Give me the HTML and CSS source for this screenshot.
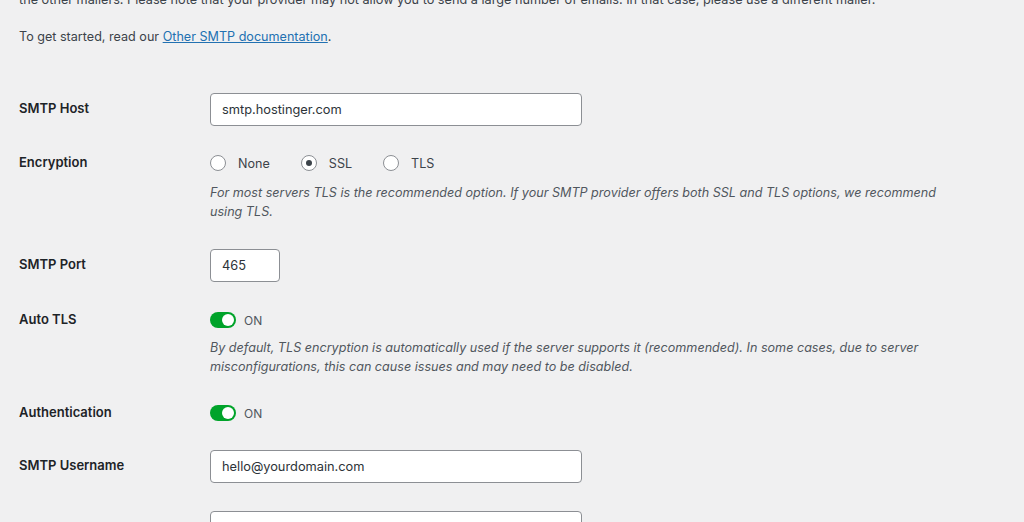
FILE: index.html
```html
<!DOCTYPE html>
<html lang="en">
<head>
<meta charset="utf-8">
<title>Other SMTP settings</title>
<link rel="stylesheet" href="styles.css">
</head>
<body>
<div class="page">
  <p class="intro intro-cut">the other mailers. Please note that your provider may not allow you to send a large number of emails. In that case, please use a different mailer.</p>
  <p class="intro">To get started, read our <a href="#" class="doc-link">Other SMTP documentation</a>.</p>

  <div class="form">
    <div class="row row-input">
      <div class="label">SMTP Host</div>
      <div class="field"><input class="text" type="text" value="smtp.hostinger.com"></div>
    </div>

    <div class="row row-tight">
      <div class="label">Encryption</div>
      <div class="field">
        <div class="radios">
          <span class="radio"></span><span class="radio-label">None</span>
          <span class="radio checked"></span><span class="radio-label">SSL</span>
          <span class="radio"></span><span class="radio-label">TLS</span>
        </div>
        <p class="desc desc-enc">For most servers TLS is the recommended option. If your SMTP provider offers both SSL and TLS options, we recommend using TLS.</p>
      </div>
    </div>

    <div class="row row-input">
      <div class="label">SMTP Port</div>
      <div class="field"><input class="text text-port" type="text" value="465"></div>
    </div>

    <div class="row">
      <div class="label">Auto TLS</div>
      <div class="field">
        <div class="toggle-wrap"><span class="toggle"><span class="knob"></span></span><span class="toggle-label">ON</span></div>
        <p class="desc desc-tls">By default, TLS encryption is automatically used if the server supports it (recommended). In some cases, due to server misconfigurations, this can cause issues and may need to be disabled.</p>
      </div>
    </div>

    <div class="row row-tight">
      <div class="label">Authentication</div>
      <div class="field">
        <div class="toggle-wrap"><span class="toggle"><span class="knob"></span></span><span class="toggle-label">ON</span></div>
      </div>
    </div>

    <div class="row row-input row-tight">
      <div class="label">SMTP Username</div>
      <div class="field"><input class="text" type="text" value="hello@yourdomain.com"></div>
    </div>

    <div class="row row-input row-last">
      <div class="label">SMTP Password</div>
      <div class="field"><input class="text" type="password" value=""></div>
    </div>
  </div>
</div>
</body>
</html>
```

FILE: styles.css
```css
html, body {
  margin: 0;
  padding: 0;
  background: #f0f0f1;
}

body {
  font-family: Inter, "Liberation Sans", sans-serif;
  font-size: 13px;
  color: #3c434a;
  overflow: hidden;
}

.page {
  padding: 0 19px;
}

.intro {
  margin: 0 0 20px;
  line-height: 19px;
  font-size: 12.6px;
}

.intro-cut {
  margin-top: -10px;
  margin-bottom: 18px;
  white-space: nowrap;
  font-size: 12.7px;
}

.doc-link {
  color: #2271b1;
  text-decoration: underline;
}

.form {
  margin-top: 47px;
  display: flex;
  flex-direction: column;
  gap: 28px;
}

.row {
  display: flex;
  align-items: flex-start;
}

.row-tight {
  margin-top: -1px;
}

.label {
  width: 191px;
  flex: none;
  font-weight: 600;
  font-size: 13px;
  line-height: 18px;
  color: #1d2327;
}

.row-input .label {
  margin-top: 6px;
}

.row-input.row-last .label {
  margin-top: 9px;
}

.field {
  flex: 1;
}

.text {
  display: block;
  box-sizing: border-box;
  width: 372px;
  height: 33px;
  margin: 0;
  padding: 0 11px;
  border: 1px solid #8c8f94;
  border-radius: 4px;
  background: #fff;
  font-family: Inter, "Liberation Sans", sans-serif;
  font-size: 12.8px;
  color: #2c3338;
}

.text-port {
  width: 70px;
}

.radios {
  display: flex;
  align-items: center;
  height: 20px;
}

.radio {
  box-sizing: border-box;
  width: 16px;
  height: 16px;
  border: 1px solid #8c8f94;
  border-radius: 50%;
  background: #fff;
  margin-right: 12px;
  display: flex;
  align-items: center;
  justify-content: center;
}

.radio.checked::after {
  content: "";
  width: 6px;
  height: 6px;
  border-radius: 50%;
  background: #3c434a;
}

.radio-label {
  margin-right: 31px;
  font-size: 12.6px;
  color: #3c434a;
}

.desc {
  margin: 0;
  max-width: 745px;
  font-size: 12.6px;
  font-style: italic;
  line-height: 19px;
  color: #50575e;
}

.desc-enc {
  margin-top: 10px;
}

.desc-tls {
  margin-top: 8px;
}

.toggle-wrap {
  display: flex;
  align-items: center;
  height: 20px;
}

.toggle {
  position: relative;
  width: 26px;
  height: 16px;
  border-radius: 8px;
  background: #00a32a;
}

.knob {
  position: absolute;
  top: 2px;
  right: 2px;
  width: 12px;
  height: 12px;
  border-radius: 50%;
  background: #fff;
}

.toggle-label {
  margin-left: 8px;
  font-size: 12px;
  color: #50575e;
}
```
